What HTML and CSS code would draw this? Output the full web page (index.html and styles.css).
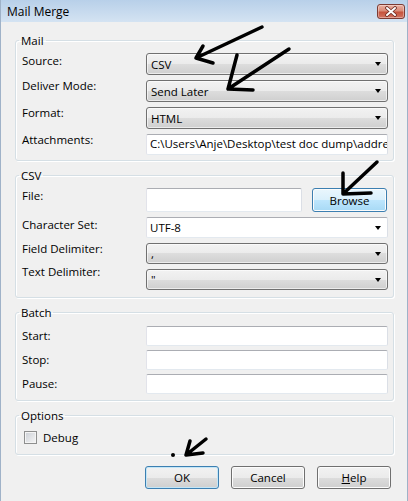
FILE: index.html
```html
<!DOCTYPE html>
<html lang="en">
<head>
<meta charset="utf-8">
<title>Mail Merge</title>
<link rel="stylesheet" href="styles.css">
</head>
<body>
<div class="window">
  <div class="titlebar">
    <span class="title">Mail Merge</span>
    <div class="close" aria-label="Close">
      <svg width="14" height="11" viewBox="0 0 14 11">
        <path d="M3 2 L11 9 M11 2 L3 9" stroke="#6b2a22" stroke-width="3.6" stroke-linecap="round" fill="none"/>
        <path d="M3 2 L11 9 M11 2 L3 9" stroke="#ffffff" stroke-width="2" stroke-linecap="round" fill="none"/>
      </svg>
    </div>
  </div>

  <div class="content">
    <fieldset class="group group-mail">
      <legend>Mail</legend>
      <div class="row">
        <span class="lbl">Source:</span>
        <div class="combo"><span class="val">CSV</span><i class="arrow"></i></div>
      </div>
      <div class="row">
        <span class="lbl">Deliver Mode:</span>
        <div class="combo"><span class="val">Send Later</span><i class="arrow"></i></div>
      </div>
      <div class="row">
        <span class="lbl">Format:</span>
        <div class="combo"><span class="val">HTML</span><i class="arrow"></i></div>
      </div>
      <div class="row">
        <span class="lbl">Attachments:</span>
        <div class="textbox tb-attach">C:\Users\Anje\Desktop\test doc dump\addre</div>
      </div>
    </fieldset>

    <fieldset class="group group-csv">
      <legend>CSV</legend>
      <div class="row">
        <span class="lbl">File:</span>
        <div class="textbox tb-file"></div>
        <div class="btn btn-browse">Browse</div>
      </div>
      <div class="row">
        <span class="lbl">Character Set:</span>
        <div class="combo combo-edit"><span class="val">UTF-8</span><i class="arrow"></i></div>
      </div>
      <div class="row">
        <span class="lbl lbl-up2">Field Delimiter:</span>
        <div class="combo combo-small"><span class="val">,</span><i class="arrow"></i></div>
      </div>
      <div class="row">
        <span class="lbl lbl-up5">Text Delimiter:</span>
        <div class="combo combo-small"><span class="val">"</span><i class="arrow"></i></div>
      </div>
    </fieldset>

    <fieldset class="group group-batch">
      <legend>Batch</legend>
      <div class="row">
        <span class="lbl">Start:</span>
        <div class="textbox tb-batch"></div>
      </div>
      <div class="row">
        <span class="lbl">Stop:</span>
        <div class="textbox tb-batch"></div>
      </div>
      <div class="row">
        <span class="lbl">Pause:</span>
        <div class="textbox tb-batch"></div>
      </div>
    </fieldset>

    <fieldset class="group group-options">
      <legend>Options</legend>
      <div class="check-row">
        <span class="check"></span>
        <span>Debug</span>
      </div>
    </fieldset>

    <div class="buttons">
      <div class="btn btn-default">OK</div>
      <div class="btn">Cancel</div>
      <div class="btn"><u>H</u>elp</div>
    </div>
  </div>

  <svg class="annotations" width="408" height="501" viewBox="0 0 408 501">
    <g stroke="#000" stroke-width="3.5" stroke-linecap="round" stroke-linejoin="round" fill="none">
      <path d="M262 27 L196 58 M196 58 L203 46 M196 58 L213 63"/>
      <path d="M289 49 L228 89 M237 55 L228 89 L253 90"/>
      <path d="M377 162 L344 193 M343 173 L343 194 L371 193"/>
      <path d="M206 439 L186 455 M190 441 L186 455 L203 453"/>
    </g>
    <circle cx="173" cy="455" r="2" fill="#000"/>
  </svg>
</div>
</body>
</html>
```

FILE: styles.css
```css
* {
  box-sizing: border-box;
}

html,
body {
  margin: 0;
  padding: 0;
}

body {
  width: 408px;
  height: 501px;
  overflow: hidden;
  font-family: "Open Sans", "Liberation Sans", sans-serif;
  font-size: 11.5px;
  color: #000;
  background: #f0f0f0;
}

.window {
  position: relative;
  width: 408px;
  height: 501px;
  background: #f0f0f0;
  border-left: 1px solid #9fb2c8;
  border-right: 1px solid #9fb2c8;
}

.titlebar {
  height: 22px;
  display: flex;
  justify-content: space-between;
  align-items: flex-start;
  padding-left: 6px;
  background: linear-gradient(#b8d0e9, #d4e3f2);
}

.title {
  font-size: 12px;
  line-height: 22px;
  padding-top: 1px;
  color: #000;
}

.close {
  width: 28px;
  height: 15px;
  margin-top: 4px;
  margin-right: 2px;
  border: 1px solid #7c3b33;
  border-radius: 3px;
  background: linear-gradient(#eab0a2, #d98b78 45%, #c5533d 55%, #d27462);
  box-shadow: inset 0 0 0 1px rgba(255, 255, 255, 0.35);
  display: flex;
  align-items: center;
  justify-content: center;
}

.content {
  display: flex;
  flex-direction: column;
  gap: 7px;
  padding: 11px 13px 0 14px;
}

.group {
  margin: 0;
  min-width: 0;
  border: 1px solid #d5dfe5;
  border-radius: 3px;
  box-shadow: inset 1px 1px 0 #fff, 1px 1px 0 #fff;
  padding: 5px 5px 5px 6px;
}

.group legend {
  padding: 0 2px;
  margin-left: -3px;
  line-height: 15px;
}

.group-csv {
  padding-bottom: 7px;
}

.group-batch {
  padding-top: 6px;
  padding-bottom: 6px;
}

.group-options {
  padding-top: 7px;
  padding-bottom: 9px;
}

.row {
  display: flex;
  align-items: flex-start;
}

.row + .row {
  margin-top: 5px;
}

.group-batch .row + .row {
  margin-top: 4px;
}

.lbl {
  flex: none;
  width: 124px;
  line-height: 15px;
}

.group-mail .row + .row .lbl {
  margin-top: -2px;
}

.group-batch .lbl {
  margin-top: 2px;
}

.lbl-up2 {
  margin-top: -2px;
}

.lbl-up5 {
  margin-top: -5px;
}

.combo {
  flex: 1;
  height: 22px;
  border: 1px solid #707070;
  border-radius: 3px;
  background: linear-gradient(#f2f2f2, #ebebeb 50%, #dddddd 50%, #cfcfcf);
  box-shadow: inset 0 0 0 1px rgba(255, 255, 255, 0.6);
  display: flex;
  align-items: center;
  justify-content: space-between;
  padding: 0 6px 0 4px;
  line-height: 15px;
}

.combo-small {
  height: 21px;
}

.combo-edit {
  height: 21px;
  background: #fff;
  box-shadow: none;
  border-color: #abadb3 #dbdfe6 #e3e9ef #e2e3ea;
  border-radius: 2px;
  padding-left: 3px;
}

.arrow {
  display: block;
  width: 1px;
  height: 0;
  border-left: 3px solid transparent;
  border-right: 3px solid transparent;
  border-top: 4px solid #000;
}

.textbox {
  flex: 1;
  height: 20px;
  background: #fff;
  border: 1px solid;
  border-color: #abadb3 #dbdfe6 #e3e9ef #e2e3ea;
  border-radius: 2px;
  padding: 0 3px;
  overflow: hidden;
  white-space: nowrap;
  line-height: 18px;
}

.tb-attach {
  height: 21px;
  padding-right: 0;
}

.tb-file {
  flex: none;
  width: 156px;
  height: 24px;
}

.btn {
  width: 74px;
  height: 23px;
  border: 1px solid #707070;
  border-radius: 3px;
  background: linear-gradient(#f2f2f2, #ebebeb 50%, #dddddd 50%, #cfcfcf);
  box-shadow: inset 0 0 0 1px #fcfcfc;
  display: flex;
  align-items: center;
  justify-content: center;
  line-height: 15px;
}

.btn-browse {
  flex: none;
  width: 75px;
  height: 24px;
  margin-left: 10px;
  border-color: #3c7fb1;
  background: linear-gradient(#eaf6fd, #d9f0fc 50%, #bee6fd 50%, #a7d9f5);
}

.btn-default {
  border-color: #3c7fb1;
  box-shadow: inset 0 0 0 1px #c3e6f7;
}

.check-row {
  display: flex;
  align-items: center;
  gap: 6px;
  height: 15px;
  padding-left: 2px;
}

.check {
  width: 13px;
  height: 13px;
  border: 1px solid #8e8f8f;
  background: linear-gradient(135deg, #cbcfd5, #f6f6f6);
  box-shadow: inset 0 0 0 1px #f4f4f4;
}

.buttons {
  display: flex;
  justify-content: flex-end;
  gap: 12px;
  margin-top: 4px;
  padding-right: 3px;
}

.annotations {
  position: absolute;
  top: 0;
  left: -1px;
  pointer-events: none;
}
```
